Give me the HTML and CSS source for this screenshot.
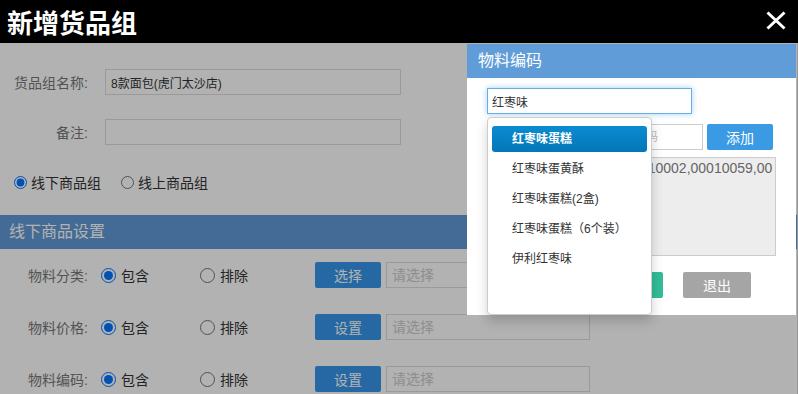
FILE: index.html
```html
<!DOCTYPE html>
<html lang="zh-CN">
<head>
    <meta charset="UTF-8">
    <meta name="viewport" content="width=device-width, initial-scale=1.0">
    <title>新增货品组</title>
    <link rel="stylesheet" href="styles.css">
</head>
<body>

<div class="topbar">
    <h1 class="title">新增货品组</h1>
    <span class="close">
        <svg width="20" height="19" viewBox="0 0 20 19">
            <path d="M1.5 1.5 L18.5 17.5 M18.5 1.5 L1.5 17.5" stroke="#fff" stroke-width="3" fill="none"/>
        </svg>
    </span>
</div>

<div class="page">
    <div class="form">
        <div class="field">
            <label class="field-label">货品组名称:</label>
            <input type="text" class="text-input" value="8款面包(虎门太沙店)">
        </div>
        <div class="field">
            <label class="field-label">备注:</label>
            <input type="text" class="text-input">
        </div>
        <div class="type-row">
            <label class="radio"><input type="radio" name="type" checked>线下商品组</label>
            <label class="radio"><input type="radio" name="type">线上商品组</label>
        </div>
    </div>

    <div class="section-title">线下商品设置</div>

    <div class="rules">
        <div class="rule-row">
            <label class="rule-label">物料分类:</label>
            <div class="rule-options">
                <label class="radio big"><input type="radio" name="r1" checked>包含</label>
                <label class="radio big"><input type="radio" name="r1">排除</label>
            </div>
            <button class="btn btn-blue">选择</button>
            <input type="text" class="pick-input" placeholder="请选择">
        </div>
        <div class="rule-row">
            <label class="rule-label">物料价格:</label>
            <div class="rule-options">
                <label class="radio big"><input type="radio" name="r2" checked>包含</label>
                <label class="radio big"><input type="radio" name="r2">排除</label>
            </div>
            <button class="btn btn-blue">设置</button>
            <input type="text" class="pick-input" placeholder="请选择">
        </div>
        <div class="rule-row">
            <label class="rule-label">物料编码:</label>
            <div class="rule-options">
                <label class="radio big"><input type="radio" name="r3" checked>包含</label>
                <label class="radio big"><input type="radio" name="r3">排除</label>
            </div>
            <button class="btn btn-blue">设置</button>
            <input type="text" class="pick-input" placeholder="请选择">
        </div>
    </div>

    <div class="mask"></div>

    <!-- 物料编码弹窗 -->
    <div class="modal">
        <div class="modal-head">物料编码</div>
        <div class="modal-body">
            <input type="text" class="search-input" value="红枣味">
            <div class="add-row">
                <input type="text" class="code-input" placeholder="请输入需要添加的物料编码">
                <button class="btn btn-add">添加</button>
            </div>
            <textarea class="code-list">00010000,00010001,00010002,00010059,00010060</textarea>
            <div class="modal-actions">
                <button class="btn btn-green">确定</button>
                <button class="btn btn-gray">退出</button>
            </div>
        </div>

        <ul class="suggest">
            <li class="suggest-item active">红枣味蛋糕</li>
            <li class="suggest-item">红枣味蛋黄酥</li>
            <li class="suggest-item">红枣味蛋糕(2盒)</li>
            <li class="suggest-item">红枣味蛋糕（6个装）</li>
            <li class="suggest-item">伊利红枣味</li>
        </ul>
    </div>
</div>

</body>
</html>
```

FILE: styles.css
```css
* {
    box-sizing: border-box;
}
body {
    margin: 0;
    width: 798px;
    height: 394px;
    overflow: hidden;
    font-family: "Liberation Sans", "Noto Sans CJK SC", sans-serif;
    font-size: 14px;
    color: #333;
    background: #fff;
}
.topbar {
    height: 43px;
    background: #000;
    display: flex;
    align-items: center;
    justify-content: space-between;
    padding: 0 12px 0 7px;
}
.title {
    margin: 0;
    color: #fff;
    font-size: 26px;
    font-weight: bold;
    font-family: "Noto Sans CJK SC", sans-serif;
    line-height: 1;
}
.close {
    display: flex;
    margin-top: -3px;
}
.page {
    position: relative;
    height: 351px;
    border-right: 1px solid #999;
}
.form {
    padding-top: 26px;
}
.field {
    display: flex;
    align-items: center;
    height: 26px;
    margin-bottom: 24px;
}
.field-label {
    width: 105px;
    padding-right: 17px;
    text-align: right;
    color: #777;
    white-space: nowrap;
    flex: none;
}
.text-input {
    width: 296px;
    height: 26px;
    border: 1px solid #ddd;
    padding: 0 5px;
    font-family: inherit;
    font-size: 12px;
    color: #333;
    outline: none;
}
.type-row {
    display: flex;
    align-items: center;
    height: 26px;
    padding-left: 14px;
}
.radio {
    display: flex;
    align-items: center;
    color: #333;
    white-space: nowrap;
}
.radio input {
    width: 13px;
    height: 13px;
    margin: 0 4px 0 0;
}
.type-row .radio + .radio {
    margin-left: 20px;
}
.section-title {
    margin-top: 20px;
    height: 34px;
    line-height: 34px;
    padding-left: 9px;
    background: #609ad6;
    color: #fff;
    font-size: 16px;
}
.rules {
    padding-top: 13px;
}
.rule-row {
    display: flex;
    align-items: center;
    height: 26px;
    margin-bottom: 26px;
}
.rule-label {
    width: 101px;
    padding-right: 13px;
    text-align: right;
    color: #777;
    white-space: nowrap;
    flex: none;
}
.rule-options {
    display: flex;
    width: 214px;
    flex: none;
}
.rule-options .radio {
    width: 99px;
}
.radio.big input {
    width: 15px;
    height: 15px;
    margin-right: 5px;
}
.btn {
    height: 26px;
    width: 66px;
    border: none;
    border-radius: 2px;
    color: #fff;
    font-family: inherit;
    font-size: 14px;
    padding: 0;
    cursor: pointer;
    flex: none;
}
.btn-blue {
    background: #3696ea;
}
.pick-input {
    margin-left: 5px;
    width: 204px;
    height: 26px;
    border: 1px solid #ddd;
    padding: 0 5px;
    font-family: inherit;
    font-size: 14px;
    outline: none;
}
.pick-input::placeholder {
    color: #ccc;
}
.mask {
    position: absolute;
    inset: 0;
    background: rgba(0, 0, 0, 0.3);
}
.modal {
    position: absolute;
    left: 467px;
    top: 1px;
    width: 329px;
    height: 271px;
    background: #fff;
}
.modal-head {
    height: 34px;
    line-height: 34px;
    padding-left: 11px;
    background: #5f9cd8;
    color: #fff;
    font-size: 16px;
}
.modal-body {
    padding: 10px 20px;
}
.search-input {
    display: block;
    width: 205px;
    height: 26px;
    border: 1px solid #66afe9;
    box-shadow: 0 0 6px rgba(102, 175, 233, 0.6);
    padding: 0 4px;
    font-family: inherit;
    font-size: 12px;
    color: #333;
    outline: none;
}
.add-row {
    display: flex;
    margin-top: 10px;
}
.code-input {
    width: 216px;
    height: 26px;
    border: 1px solid #ccc;
    padding: 0 0 0 26px;
    font-family: inherit;
    font-size: 12px;
    outline: none;
}
.code-input::placeholder {
    color: #bbb;
}
.btn-add {
    margin-left: 4px;
    background: #3a9ae4;
}
.code-list {
    display: block;
    margin-top: 7px;
    width: 289px;
    height: 99px;
    border: 1px solid #ccc;
    background: #ededed;
    padding: 2px 2px 2px 4px;
    font-family: "Liberation Sans", sans-serif;
    font-size: 14px;
    color: #666;
    resize: none;
    word-break: break-all;
    outline: none;
}
.modal-actions {
    display: flex;
    gap: 20px;
    margin-top: 16px;
    padding-left: 108px;
}
.btn-green {
    width: 68px;
    background: #33bd97;
}
.btn-gray {
    width: 68px;
    background: #a5a5a5;
}
.suggest {
    position: absolute;
    left: 20px;
    top: 73px;
    width: 165px;
    height: 198px;
    margin: 0;
    padding: 8px 4px;
    list-style: none;
    background: #fff;
    border: 1px solid #ccc;
    border-radius: 4px;
    box-shadow: 0 6px 12px rgba(0, 0, 0, 0.18);
}
.suggest-item {
    height: 26px;
    line-height: 26px;
    margin-bottom: 4px;
    padding-left: 20px;
    font-size: 12px;
    color: #333;
    border-radius: 3px;
    white-space: nowrap;
    text-spacing-trim: space-all;
}
.suggest-item.active {
    background: linear-gradient(#0a8bd1, #0477b7);
    color: #fff;
    font-weight: bold;
}
```
